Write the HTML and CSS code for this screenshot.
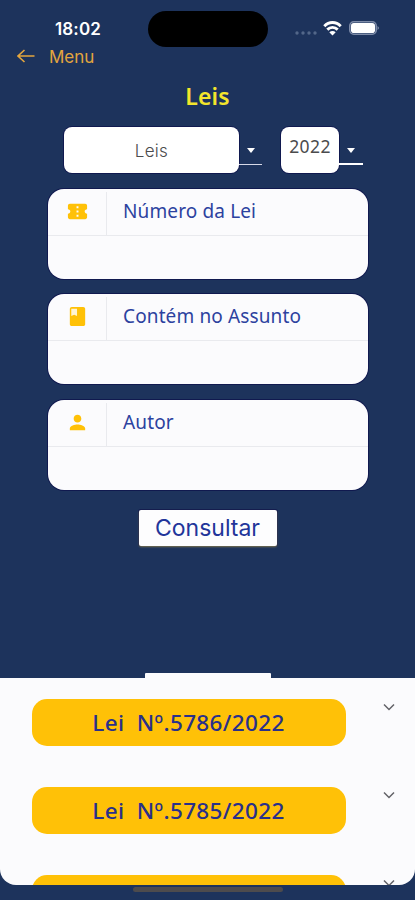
FILE: index.html
```html
<!DOCTYPE html>
<html lang="pt-BR">
<head>
<meta charset="utf-8">
<title>Leis</title>
<link rel="stylesheet" href="styles.css">
</head>
<body>
<main class="screen">
  <header class="status">
    <span class="time">18:02</span>
    <div class="island"></div>
    <div class="indicators">
      <svg class="dots" viewBox="0 0 22 4"><circle cx="2" cy="2" r="1.7"/><circle cx="8" cy="2" r="1.7"/><circle cx="14" cy="2" r="1.7"/><circle cx="20" cy="2" r="1.7"/></svg>
      <svg class="wifi" viewBox="0 0 19 15"><path d="M1.3 5.200C6 .2 13 .2 17.700 5.200M4.300 8.600C7.300 5.600 11.700 5.600 14.700 8.600" fill="none" stroke="#fff" stroke-width="2.900"/><path d="M6.300 11.300Q9.500 8.700 12.700 11.300L9.500 14.500Z" fill="#fff"/></svg>
      <svg class="battery" viewBox="0 0 31 14"><rect x=".8" y=".8" width="26.400" height="12.400" rx="4" fill="none" stroke="#7d8ba8" stroke-width="1.600"/><rect x="2" y="2" width="24" height="10" rx="2.800" fill="#fff"/><path d="M28.500 5q3 2 0 4z" fill="#7d8ba8"/></svg>
    </div>
  </header>
  <nav class="back">
    <svg viewBox="0 0 18 14"><path d="M17.500 7H1M7.500 1 1 7l6.500 6" fill="none" stroke="currentColor" stroke-width="1.600"/></svg>
    <span>Menu</span>
  </nav>
  <h1>Leis</h1>
  <div class="selects">
    <div class="select kind"><span class="value">Leis</span><span class="drop"><i></i></span></div>
    <div class="select year"><span class="value">2022</span><span class="drop"><i></i></span></div>
  </div>
  <section class="fields">
    <div class="field">
      <div class="label"><span class="icon"><svg viewBox="0 0 24 24"><path fill-rule="evenodd" d="M19.500 12c0-1.300 1-2.300 2.500-2.300V6c0-1.100-.9-2-2-2H4C2.900 4 2 4.900 2 6v3.700c1.500 0 2.500 1 2.500 2.300s-1 2.300-2.500 2.300V18c0 1.100.9 2 2 2h16c1.100 0 2-.9 2-2v-3.700c-1.500 0-2.500-1-2.500-2.300zM13 17.500h-2v-2h2zM13 13h-2v-2h2zM13 8.500h-2v-2h2z"/></svg></span><span class="name">Número da Lei</span></div>
      <div class="input"></div>
    </div>
    <div class="field">
      <div class="label"><span class="icon"><svg viewBox="0 0 24 24"><path d="M18 2H6C4.900 2 4 2.900 4 4v16c0 1.100.9 2 2 2h12c1.100 0 2-.9 2-2V4c0-1.100-.9-2-2-2z"/><path class="page" d="M5.500 4h6v7.500l-3-1.200-3 1.200z"/></svg></span><span class="name">Contém no Assunto</span></div>
      <div class="input"></div>
    </div>
    <div class="field">
      <div class="label"><span class="icon"><svg viewBox="0 0 24 24"><path d="M12 12c2.210 0 4-1.790 4-4s-1.790-4-4-4-4 1.790-4 4 1.790 4 4 4zm0 2c-2.670 0-8 1.340-8 4v2h16v-2c0-2.660-5.330-4-8-4z"/></svg></span><span class="name">Autor</span></div>
      <div class="input"></div>
    </div>
  </section>
  <button class="submit">Consultar</button>
  <div class="handle"></div>
  <section class="sheet">
    <div class="row"><div class="law">Lei&nbsp; Nº.5786/2022</div><svg class="chevron" viewBox="0 0 12 8"><path d="m1 1.500 5 5 5-5"/></svg></div>
    <div class="row"><div class="law">Lei&nbsp; Nº.5785/2022</div><svg class="chevron" viewBox="0 0 12 8"><path d="m1 1.500 5 5 5-5"/></svg></div>
    <div class="row"><div class="law"></div><svg class="chevron" viewBox="0 0 12 8"><path d="m1 1.500 5 5 5-5"/></svg></div>
  </section>
  <div class="home"></div>
</main>
</body>
</html>
```
FILE: styles.css
```css
* { box-sizing: border-box; }
body { margin: 0; background: #1d335c; }
.screen {
  width: 415px;
  height: 900px;
  overflow: hidden;
  display: flex;
  flex-direction: column;
  background: #1d335c;
  font-family: "Noto Sans", sans-serif;
}
.status {
  height: 47px;
  padding: 11px 0 0 55px;
  display: flex;
  flex-shrink: 0;
}
.time {
  width: 93px;
  padding-top: 8px;
  font: 600 17px/20px Inter, sans-serif;
  letter-spacing: 0.15px;
  color: #fff;
}
.island { width: 120px; height: 36px; border-radius: 18px; background: #000; }
.indicators { display: flex; margin-left: 27px; }
.dots { width: 22px; height: 4px; margin-top: 20px; fill: #536789; }
.wifi { width: 19px; height: 15px; margin: 10px 0 0 6px; }
.battery { width: 31px; height: 14px; margin: 10px 0 0 7px; }
.back {
  height: 20px;
  padding-left: 17px;
  display: flex;
  align-items: center;
  gap: 14px;
  flex-shrink: 0;
  color: #e4a63e;
  font: 17px/20px Inter, sans-serif;
}
.back svg { width: 18px; height: 14px; margin-top: -2px; }
.back span { margin-top: -1px; }
h1 {
  margin: 12px 0 0;
  height: 35px;
  font-size: 23px;
  line-height: 34px;
  font-weight: 600;
  letter-spacing: 0.1px;
  text-align: center;
  color: #f3e52c;
}
.selects { display: flex; gap: 19px; padding-left: 64px; margin-top: 13px; }
.select { display: flex; }
.value {
  height: 46px;
  border-radius: 8px;
  background: #fff;
  text-align: center;
  color: #4b4b4d;
  box-shadow: 0 0 0 1px #10194f;
}
.kind .value { width: 175px; font: 300 17px/48px Inter, sans-serif; letter-spacing: 0.3px; }
.year .value { width: 58px; font-size: 17.500px; line-height: 38px; letter-spacing: 0.4px; }
.drop {
  width: 23px;
  height: 38px;
  border-bottom: 1.5px solid #d7d9e8;
  display: flex;
  justify-content: center;
  padding-top: 21px;
}
.year .drop { width: 24px; border-bottom: 2px solid #fff; }
.drop i { width: 0; height: 0; border: 4.500px solid transparent; border-top: 5px solid #fff; }
.fields { display: flex; flex-direction: column; gap: 15.500px; margin: 15.500px 0 0 48px; width: 320px; }
.field { height: 90px; border-radius: 16px; background: #fbfbfd; box-shadow: 0 0 0 1px #10194f; }
.label { height: 47px; display: flex; border-bottom: 1px solid #e9eaee; }
.icon {
  width: 59px;
  margin-top: 3px;
  display: flex;
  justify-content: center;
  padding-top: 8px;
  border-right: 1px solid #e9eaee;
}
.icon svg { width: 23px; height: 23px; fill: #ffc107; }
.icon .page { fill: #fff4d2; }
.name { padding-left: 16px; font-size: 19px; line-height: 45px; letter-spacing: 0.13px; color: #2c429f; }
.submit {
  align-self: center;
  width: 138px;
  height: 36px;
  margin-top: 20.500px;
  padding: 0;
  border: 0;
  border-radius: 2px;
  background: #fdfdfe;
  box-shadow: 0 1px 2px #7d7a52, 0 0 0 1px #10194f;
  color: #22359a;
  font: 23px/37px Inter, sans-serif;
  flex-shrink: 0;
}
.handle { width: 126px; height: 5px; margin: 127px 0 0 145px; background: #fbfbfd; border-radius: 1px 1px 0 0; flex-shrink: 0; }
.sheet {
  height: 207px;
  padding: 20.500px 0 0 31.500px;
  display: flex;
  flex-direction: column;
  gap: 41px;
  flex-shrink: 0;
  overflow: hidden;
  background: #fbfbfd;
  border-radius: 0 0 16px 16px;
}
.row { display: flex; gap: 37px; flex-shrink: 0; }
.law {
  width: 314px;
  height: 47px;
  border-radius: 15px;
  background: #ffc107;
  color: #29308a;
  font-size: 22.500px;
  font-weight: 500;
  line-height: 47px;
  letter-spacing: 0.35px;
  text-align: center;
}
.chevron { width: 12px; height: 8px; margin-top: 4px; fill: none; stroke: #626267; stroke-width: 1.500; }
.home { width: 150px; height: 5px; margin: 2px 0 0 133px; border-radius: 3px; background: #4d4b4d; flex-shrink: 0; }
```
